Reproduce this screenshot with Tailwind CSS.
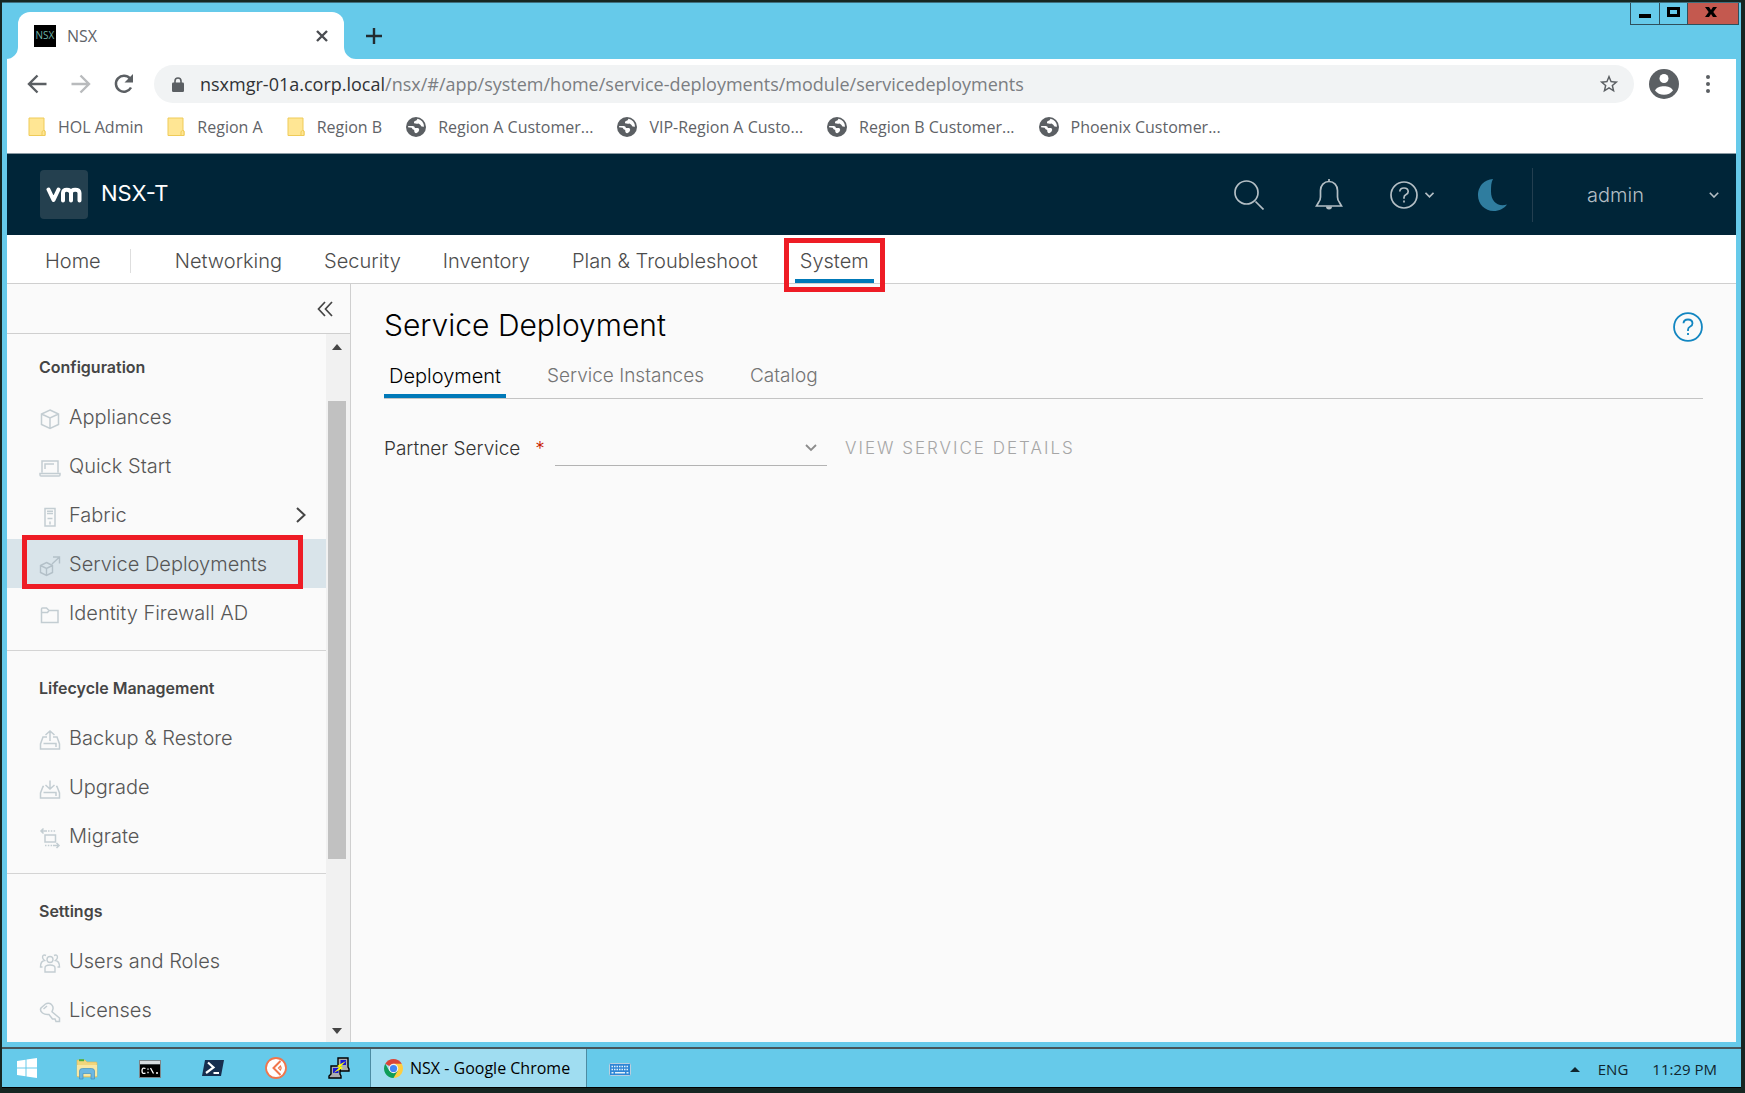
<!DOCTYPE html>
<html lang="en">
<head>
<meta charset="utf-8">
<title>NSX</title>
<script src="https://cdn.jsdelivr.net/npm/@tailwindcss/browser@4"></script>
</head>
<body class="flex h-screen flex-col overflow-hidden bg-[#162622] pt-0.5 pr-1 pl-0.5 pb-[5px] font-['Open_Sans',sans-serif] text-[#5f6368]">

<!-- Browser window -->
<div class="flex min-h-0 flex-1 flex-col bg-[#66caea] px-[5px] pb-[5px] border-t border-[#3f6f7e]">

  <!-- Title bar -->
  <div class="relative flex h-14 shrink-0 items-end">
    <div class="relative ml-[11px] flex h-[47px] w-[326px] items-center rounded-t-xl bg-white pl-4 pr-3">
      <svg class="absolute -left-3 bottom-0 size-3" viewBox="0 0 12 12" aria-hidden="true"><path d="M12 0v12H0A12 12 0 0 0 12 0z" fill="#fff"/></svg>
      <svg class="absolute -right-3 bottom-0 size-3" viewBox="0 0 12 12" aria-hidden="true"><path d="M0 0v12h12A12 12 0 0 1 0 0z" fill="#fff"/></svg>
      <span class="flex h-[22px] w-[22px] items-center justify-center overflow-hidden bg-black text-[10px] text-[#6fb3a6]">NSX</span>
      <span class="ml-[11px] flex-1 text-base">NSX</span>
      <button aria-label="Close tab" class="flex size-5 items-center justify-center"><svg class="size-3" viewBox="0 0 12 12" stroke="#4a4d51" stroke-width="2.4"><path d="M1 1l10 10M11 1L1 11"/></svg></button>
    </div>
    <button aria-label="New tab" class="mb-[13px] ml-5 flex size-5 items-center justify-center"><svg class="size-4" viewBox="0 0 16 16" stroke="#222b30" stroke-width="2.4"><path d="M8 0v16M0 8h16"/></svg></button>
    <div class="absolute -right-[3px] top-0 flex h-[22px] border border-t-0 border-[#2f4f5c]">
      <button aria-label="Minimize" class="flex w-[29px] items-center justify-center border-r border-[#2f4f5c] pt-1"><span class="h-1 w-3 bg-black"></span></button>
      <button aria-label="Maximize" class="flex w-7 items-center justify-center border-r border-[#2f4f5c] pb-1"><span class="h-2.5 w-[13px] border-[3px] border-black"></span></button>
      <button aria-label="Close" class="flex w-[50px] items-center justify-center bg-[#c4594f] pb-1 pr-1"><svg class="h-2.5 w-3" viewBox="0 0 12 10" fill="#000"><path d="M0 0h4l2 3 2-3h4L8.300 5 12 10H8L6 7l-2 3H0l3.700-5z"/></svg></button>
    </div>
  </div>

  <!-- Toolbar -->
  <div class="flex h-[50px] shrink-0 items-center bg-white pl-5 pr-[18px]">
    <button aria-label="Back"><svg class="size-5" viewBox="0 0 20 20" fill="none" stroke="#5b5f63" stroke-width="2.400"><path d="M19.500 10H2.500M10.500 1.500L2 10l8.500 8.500"/></svg></button>
    <button aria-label="Forward" class="ml-6"><svg class="size-5" viewBox="0 0 20 20" fill="none" stroke="#b9bbbd" stroke-width="2.400"><path d="M.5 10h17M9.500 1.500L18 10l-8.500 8.500"/></svg></button>
    <button aria-label="Reload" class="ml-[22px]"><svg class="size-[22px]" viewBox="0 0 22 22"><path d="M18 14.500A8 8 0 1 1 17 5.500" fill="none" stroke="#5b5f63" stroke-width="2.500"/><path d="M20 1v8.500h-8.500z" fill="#5b5f63"/></svg></button>
    <div class="ml-[19px] flex h-[38px] flex-1 items-center rounded-full bg-[#f1f3f4] pl-[18px] pr-[14px]">
      <svg class="h-[15px] w-3" viewBox="0 0 12 15" aria-hidden="true"><path d="M3 6V4a3 3 0 0 1 6 0v2" fill="none" stroke="#5b5f63" stroke-width="1.600"/><rect y="5.500" width="12" height="9.500" rx="1.200" fill="#5b5f63"/></svg>
      <div class="ml-4 flex-1 whitespace-nowrap text-lg leading-6 text-[#7b7e82]"><span class="text-[#303236]">nsxmgr-01a.corp.local</span>/nsx/#/app/system/home/service-deployments/module/servicedeployments</div>
      <button aria-label="Bookmark this tab"><svg class="size-[22px]" viewBox="0 0 24 24" fill="#5b5f63"><path d="M22 9.240l-7.190-.62L12 2 9.190 8.630 2 9.240l5.460 4.730L5.820 21 12 17.270 18.180 21l-1.630-7.030L22 9.240zM12 15.400l-3.760 2.270 1-4.280-3.320-2.880 4.380-.38L12 6.100l1.710 4.040 4.380.38-3.320 2.880 1 4.280L12 15.400z"/></svg></button>
    </div>
    <button aria-label="Profile" class="ml-[15px]"><svg class="size-[30px]" viewBox="0 0 30 30"><circle cx="15" cy="15" r="15" fill="#5b5f63"/><circle cx="15" cy="9.500" r="4.500" fill="#fff"/><path d="M6 21.500c1.500-3.200 5-4.300 9-4.300s7.500 1.100 9 4.300c-2 2.800-5.300 4.300-9 4.300s-7-1.500-9-4.300z" fill="#fff"/></svg></button>
    <button aria-label="Menu" class="ml-[19px] flex w-5 justify-center"><svg class="h-[18px] w-1" viewBox="0 0 4 18" fill="#5b5f63"><circle cx="2" cy="2" r="2"/><circle cx="2" cy="9" r="2"/><circle cx="2" cy="16" r="2"/></svg></button>
  </div>

  <!-- Bookmarks -->
  <svg class="hidden" aria-hidden="true">
    <symbol id="folder" viewBox="0 0 18 20"><path d="M1 1h15v12l1 1v4.500H1z" fill="#ffe694" stroke="#efcb58"/><path d="M14 18.500V15q0-1 1.500-1.500T17 15v3.500z" fill="#ffe694" stroke="#efcb58"/></symbol>
    <symbol id="globe" viewBox="0 0 20 20"><circle cx="10" cy="10" r="10" fill="#5b5f63"/><path d="M2.200 9h4.500q2 .2 2.300 2h3q1.300.5 1.200 2-.5 2.500-3 3.200-2.200-.2-2-3.200-2-.3-2.500-2.300L2 10.200zM11.500 1.800q-.5 2-2.500 2.200-1.500.5-1 2.300 2.500.7 4.500.2 2 .8 3 3l2.500.3A8 8 0 0 0 11.500 1.800z" fill="#fff"/></symbol>
  </svg>
  <nav aria-label="Bookmarks" class="flex h-[45px] shrink-0 items-center gap-6 whitespace-nowrap border-b border-[#8a9aa3] bg-white pb-2 pl-[21px] text-base">
    <a href="#" class="flex items-center gap-3"><svg class="h-5 w-[18px]"><use href="#folder"/></svg>HOL Admin</a>
    <a href="#" class="flex items-center gap-3"><svg class="h-5 w-[18px]"><use href="#folder"/></svg>Region A</a>
    <a href="#" class="flex items-center gap-3"><svg class="h-5 w-[18px]"><use href="#folder"/></svg>Region B</a>
    <a href="#" class="flex items-center gap-3"><svg class="size-5"><use href="#globe"/></svg>Region A Customer...</a>
    <a href="#" class="flex items-center gap-3"><svg class="size-5"><use href="#globe"/></svg>VIP-Region A Custo...</a>
    <a href="#" class="flex items-center gap-3"><svg class="size-5"><use href="#globe"/></svg>Region B Customer...</a>
    <a href="#" class="flex items-center gap-3"><svg class="size-5"><use href="#globe"/></svg>Phoenix Customer...</a>
  </nav>

  <!-- NSX application -->
  <div class="flex min-h-0 flex-1 flex-col bg-[#fafafa] font-['Inter',sans-serif] text-xl font-light text-[#454545]">
    <header class="flex h-[81px] shrink-0 items-center bg-[#002538] pl-[33px] pr-[17px] text-[#b4bfc5]">
      <div class="flex h-[49px] w-12 items-center justify-center rounded bg-[#24404f]">
        <svg class="h-4 w-9" viewBox="0 0 36 16" fill="none" stroke="#fff" stroke-width="4" stroke-linecap="round" stroke-linejoin="round" role="img" aria-label="VMware"><path d="M2.500 2.500l5 10.500 5-10.500M17 13.500V6q0-3.300 3.800-3.300T25 6v7.500M25 6q0-3.300 4.200-3.300T33.500 6v7.500"/></svg>
      </div>
      <h1 class="ml-[13px] flex-1 pb-0.5 text-[22px] font-normal text-white">NSX-T</h1>
      <button aria-label="Search"><svg class="size-[30px]" viewBox="0 0 30 30" fill="none" stroke="currentColor" stroke-width="1.700"><circle cx="12.500" cy="12.500" r="11.500"/><path d="M21.500 21.500l8 8"/></svg></button>
      <button aria-label="Notifications" class="ml-[51px]"><svg class="h-[31px] w-7" viewBox="0 0 28 31" fill="none" stroke="currentColor" stroke-width="1.700"><path d="M14 2.500c-5 0-8.500 4-8.500 9V18q0 3-2 5.500L1.500 27h25l-2-3.500q-2-2.500-2-5.500v-6.500c0-5-3.500-9-8.500-9z"/><path d="M14 0v3"/><path d="M11 27.500a3 3 0 0 0 6 0z" fill="currentColor" stroke="none"/></svg></button>
      <button aria-label="Help menu" class="ml-[47px] flex items-center gap-[7px]"><svg class="size-7" viewBox="0 0 28 28" fill="none" stroke="currentColor" stroke-width="1.700"><circle cx="14" cy="14" r="13"/><path d="M9.800 10.500Q10 7 14 7t4.200 3.500q0 2-2.100 3T14 16.500v1.200"/><path d="M14 19.500v2"/></svg><svg class="h-1.5 w-[9px]" viewBox="0 0 9 6" fill="none" stroke="currentColor" stroke-width="1.600"><path d="M.5.8l4 4 4-4"/></svg></button>
      <button aria-label="Dark theme" class="ml-[43px]"><svg class="h-8 w-[30px]" viewBox="0 0 30 32" fill="#2f7d9f"><path d="M16 0A15.500 15.500 0 0 0 1 16.500C1 25 8 32 16.500 32 22.500 32 27 29.500 30 25.500c-9 3-16-3-16-13C14 7.500 14 3.500 16 0z"/></svg></button>
      <div class="ml-[25px] h-[54px] w-px bg-[#233f50]"></div>
      <button class="ml-[54px] flex w-[132px] items-center justify-between">admin<svg class="h-1.5 w-[10px]" viewBox="0 0 10 6" fill="none" stroke="currentColor" stroke-width="1.600"><path d="M.8.8L5 5 9.200.8"/></svg></button>
    </header>

    <nav aria-label="Main" class="flex h-[49px] shrink-0 items-stretch gap-8 whitespace-nowrap border-b border-[#cfcfcf] bg-white pl-[33px] text-[#4c4c4c]">
      <a href="#" class="flex items-center px-[5px] pt-1">Home</a>
      <span class="-ml-2 mr-[7px] mt-[14px] h-6 w-px bg-[#dedede]"></span>
      <a href="#" class="flex items-center px-[5px] pt-1">Networking</a>
      <a href="#" class="flex items-center px-[5px] pt-1">Security</a>
      <a href="#" class="flex items-center px-[5px] pt-1">Inventory</a>
      <a href="#" class="flex items-center px-[5px] pt-1">Plan &amp; Troubleshoot</a>
      <a href="#" aria-current="page" class="relative flex items-center px-[5px] pt-1"><span class="absolute inset-x-0 bottom-0 h-1 bg-[#0079b8]"></span>System<span class="pointer-events-none absolute -inset-x-[11px] -bottom-[9px] top-[3px] border-[5px] border-[#ee1c25]"></span></a>
    </nav>

    <div class="flex min-h-0 flex-1">
      <!-- Sidebar -->
      <aside class="flex w-[344px] shrink-0 flex-col border-r border-[#cfcfcf]">
        <div class="flex h-[50px] shrink-0 items-center justify-end border-b border-[#cfcfcf] pr-[17px]">
          <button aria-label="Collapse sidebar"><svg class="size-4" viewBox="0 0 16 16" fill="none" stroke="#454545" stroke-width="1.700"><path d="M8 1L1.500 8 8 15M15 1L8.500 8 15 15"/></svg></button>
        </div>
        <div class="flex min-h-0 flex-1">
          <div class="min-w-0 flex-1 overflow-hidden text-[#565656]">
            <section class="border-b border-[#d4d4d4] pb-[13px] pt-2">
              <h2 class="pl-8 text-base font-semibold leading-[50px] text-[#454545]">Configuration</h2>
              <a href="#" class="flex h-[49px] items-center gap-2 pl-8"><svg class="mt-1 size-[22px]" viewBox="0 0 22 22" fill="none" stroke="#c3cdd2" stroke-width="1.500"><path d="M11 2l8.500 4v10.500L11 20.500l-8.500-4V6zM2.500 6l8.500 4 8.500-4M11 10v10.500"/></svg>Appliances</a>
              <a href="#" class="flex h-[49px] items-center gap-2 pl-8"><svg class="mt-1 size-[22px]" viewBox="0 0 22 22" fill="none" stroke="#c3cdd2" stroke-width="1.500"><path d="M3 15.500V4h16v11.500M6 12V7h9M1 16.500h20v1.500q0 1-1 1H2q-1 0-1-1z"/></svg>Quick Start</a>
              <a href="#" class="flex h-[49px] items-center gap-2 pl-8 pr-5"><svg class="mt-1 size-[22px]" viewBox="0 0 22 22" fill="none" stroke="#c3cdd2" stroke-width="1.500"><path d="M6 2.500h10v17.500H6zM8 5.200h6M8 7.500h6M8.500 12.500h5M11 15.500v3"/></svg><span class="flex-1">Fabric</span><svg class="h-4 w-2.5" viewBox="0 0 10 16" fill="none" stroke="#454545" stroke-width="2"><path d="M1 1l7.500 7L1 15"/></svg></a>
              <a href="#" aria-current="page" class="relative flex h-[49px] items-center gap-2 bg-[#d9e4ea] pl-8"><svg class="mt-1 size-[22px]" viewBox="0 0 22 22" fill="none" stroke="#b3c0c8" stroke-width="1.400"><path d="M7.500 7.500l6 3v7l-6 3-6-3v-7zM1.500 10.500l6 3 6-3M7.500 13.500v7M13 9l7.500-7M14 2h6.500v6.500"/></svg>Service Deployments<span class="pointer-events-none absolute -bottom-px -top-1 left-[15px] right-[23px] border-[5px] border-[#ee1c25]"></span></a>
              <a href="#" class="flex h-[49px] items-center gap-2 pl-8"><svg class="mt-1 size-[22px]" viewBox="0 0 22 22" fill="none" stroke="#c3cdd2" stroke-width="1.500"><path d="M2.500 18.500V5q0-1 1-1h4l2.500 2.500h9v12zM2.500 8.500h6L10 6.500"/></svg>Identity Firewall AD</a>
            </section>
            <section class="border-b border-[#d4d4d4] pb-[13px] pt-3">
              <h2 class="pl-8 text-base font-semibold leading-[50px] text-[#454545]">Lifecycle Management</h2>
              <a href="#" class="flex h-[49px] items-center gap-2 pl-8"><svg class="mt-1 size-[22px]" viewBox="0 0 22 22" fill="none" stroke="#c3cdd2" stroke-width="1.500"><path d="M8 8H4l-2.500 7v5h19v-5L18 8h-4M4.500 14.500H17v3.500M11 12V2M6.500 6L11 2l4.500 4"/></svg>Backup &amp; Restore</a>
              <a href="#" class="flex h-[49px] items-center gap-2 pl-8"><svg class="mt-1 size-[22px]" viewBox="0 0 22 22" fill="none" stroke="#c3cdd2" stroke-width="1.500"><path d="M5 8.500H4L1.500 15v5h19v-5L18 8.500h-1M4.500 14.500H17v3.500M11 2.500V11M6.500 7L11 11l4.500-4"/></svg>Upgrade</a>
              <a href="#" class="flex h-[49px] items-center gap-2 pl-8"><svg class="mt-1 size-[22px]" viewBox="0 0 22 22" fill="none" stroke="#c3cdd2" stroke-width="1.500"><path d="M6 8h10.500v7H6zM1.500 4H8M4.500 1.500L2 4l2.500 2.500M14 18.500h6M17.500 16l2.500 2.500-2.500 2.500"/><path d="M9 4h8M6 18.500h8" stroke-dasharray="1.500 1.300"/></svg>Migrate</a>
            </section>
            <section class="pb-[13px] pt-3">
              <h2 class="pl-8 text-base font-semibold leading-[50px] text-[#454545]">Settings</h2>
              <a href="#" class="flex h-[49px] items-center gap-2 pl-8"><svg class="mt-1 size-[22px]" viewBox="0 0 22 22" fill="none" stroke="#c3cdd2" stroke-width="1.400"><circle cx="11" cy="7.500" r="3"/><path d="M6 20v-4q0-3 5-3t5 3v4zM7 3.500Q4 2 3.500 5q0 2 2 3.500Q1.500 9 1.500 15h2M15 3.500q3-1.500 3.500 1.500 0 2-2 3.500 4 .5 4 6.500h-2"/></svg>Users and Roles</a>
              <a href="#" class="flex h-[49px] items-center gap-2 pl-8"><svg class="mt-1 size-[22px]" viewBox="0 0 22 22" fill="none" stroke="#c3cdd2" stroke-width="1.500"><path d="M9.500 2.200q2-.2 3.500 2 1.700 2 .7 4.500l-.7 2 7.500 6.300v3.500H17l-1-2.500h-2.500L10 13.500q-4 .5-6.500-1.500Q.5 9.500 2 7l4.500-4q1.500-1 3-.8zM4.500 8L8 5"/></svg>Licenses</a>
            </section>
          </div>
          <div class="flex w-6 flex-col items-center bg-[#f1f1f1] pb-2 pr-0.5 pt-2.5" aria-hidden="true">
            <svg class="h-1.5 w-2.5" viewBox="0 0 10 6" fill="#454545"><path d="M0 6l5-6 5 6z"/></svg>
            <div class="flex w-full flex-1 flex-col items-center pt-[51px]">
              <div class="h-[73%] w-[18px] bg-[#c1c1c1]"></div>
            </div>
            <svg class="h-1.5 w-2.5" viewBox="0 0 10 6" fill="#454545"><path d="M0 0l5 6 5-6z"/></svg>
          </div>
        </div>
      </aside>

      <!-- Content -->
      <main class="min-w-0 flex-1 px-[33px] pt-[17px]">
        <div class="flex h-12 items-center justify-between">
          <h2 class="text-[30px] leading-[48px] text-black">Service Deployment</h2>
          <button aria-label="Help" class="mt-1"><svg class="size-[30px]" viewBox="0 0 28 28" fill="none" stroke="#1286c1" stroke-width="1.700"><circle cx="14" cy="14" r="13"/><path d="M9.800 10.500Q10 7 14 7t4.200 3.500q0 2-2.100 3T14 16.500v1.200"/><path d="M14 19.500v2"/></svg></button>
        </div>
        <div role="tablist" class="flex h-[50px] gap-9 border-b border-[#c4c4c4] text-[#747474]">
          <button role="tab" aria-selected="true" class="border-b-4 border-[#0079b8] px-[5px] pt-2 text-black">Deployment</button>
          <button role="tab" aria-selected="false" class="px-[5px] pt-1.5 text-[19px]">Service Instances</button>
          <button role="tab" aria-selected="false" class="px-[5px] pt-1.5 text-[19px]">Catalog</button>
        </div>
        <div class="mt-[31px] flex h-9 items-center">
          <label for="partner" class="flex w-[171px] gap-[15px] pt-0.5 text-[19px] text-[#333]">Partner Service <span class="text-[#c92100]">*</span></label>
          <div class="relative h-full w-[272px]">
            <select id="partner" class="h-full w-full appearance-none border-b border-[#b3b3b3] bg-transparent pr-8"><option></option></select>
            <svg class="pointer-events-none absolute right-2.5 top-3.5 h-2 w-3" viewBox="0 0 12 8" fill="none" stroke="#8c8c8c" stroke-width="1.800"><path d="M1 1l5 5 5-5"/></svg>
          </div>
          <button disabled class="ml-[18px] pt-0.5 text-[17px] tracking-[2px] text-[#a6a6a6]">VIEW SERVICE DETAILS</button>
        </div>
      </main>
    </div>
  </div>
</div>

<!-- Taskbar -->
<footer class="flex h-[41px] shrink-0 items-stretch border-b border-t-2 border-b-black border-t-[#46565c] bg-[#66caea] text-base text-[#10262e]">
  <button aria-label="Start" class="flex w-[53px] items-center justify-center pr-1"><svg class="size-5" viewBox="0 0 20 20" fill="#fff"><path d="M0 3l8.500-1.200v7.700H0zM9.500 1.600L20 0v9.500H9.500zM0 10.500h8.500v7.700L0 17zM9.500 10.500H20V20L9.500 18.400z"/></svg></button>
  <button aria-label="File Explorer" class="flex w-[63px] items-center justify-center pt-0.5"><svg class="size-[22px]" viewBox="0 0 22 22"><path d="M1 2h8l2 2h9q1 0 1 1v14H2q-1 0-1-1z" fill="#f1d67c" stroke="#d7b659" stroke-width=".6"/><path d="M3 2.200h5" stroke="#4fb03a" stroke-width="2"/><path d="M1 7h20v11H1z" fill="#f8e7a4"/><path d="M3.500 21v-8q0-2.500 3-2.500h9q3 0 3 2.500v8H15v-5.500H7V21z" fill="#6bb7e2" stroke="#4490c0" stroke-width=".7"/></svg></button>
  <button aria-label="Command Prompt" class="flex w-[63px] items-center justify-center pt-0.5"><svg class="h-[18px] w-[22px]" viewBox="0 0 22 18"><path d="M0 0h22v18H0z" fill="#7c8589"/><path d="M1 1h20v3H1z" fill="#d7dcdf"/><path d="M1 4.500h20V17H1z" fill="#000"/><path d="M6.500 8.500Q3 7 3 10.800T6.500 13M9 8.500v1.300M9 11.800v1.400M11.500 8l3 5.500M17 13h2" stroke="#fff" stroke-width="1.300" fill="none"/></svg></button>
  <button aria-label="PowerShell" class="flex w-[63px] items-center justify-center"><svg class="h-4 w-[22px]" viewBox="0 0 22 16"><path d="M3 0h19l-3 16H0z" fill="#172e4e"/><path d="M6 2.500l5.500 5L4 13M11.500 13H17" stroke="#fff" stroke-width="2.200" fill="none"/></svg></button>
  <button aria-label="API client" class="flex w-[63px] items-center justify-center"><svg class="size-[22px]" viewBox="0 0 22 22" fill="none" stroke="#f0764c"><circle cx="11" cy="11" r="10" fill="#fff" stroke-width="1.800"/><path d="M15.500 4L8.500 11l7 7" stroke-width="2"/><path d="M15.500 9L13.500 11l2 2q1.500-2 0-4z" stroke-width="1.200"/></svg></button>
  <button aria-label="PuTTY" class="flex w-[63px] items-center justify-center"><svg class="size-[22px]" viewBox="0 0 22 22" stroke="#000" stroke-width="1.400"><path d="M10 1h10v9l1 2v2h-9v-2l-2-1z" fill="#a9adb0"/><path d="M12.500 3H18v5h-5.500z" fill="#1717d8" stroke="none"/><path d="M3 9h9v8l1 2v2H1v-2l2-2z" fill="#a9adb0"/><path d="M5 11h5.500v5H5z" fill="#1717d8" stroke="none"/><path d="M18 4l-9 5 2.500 1.500L5.500 16l9.500-5-2.500-1.500z" fill="#ff0" stroke="none"/></svg></button>
  <button class="flex w-[217px] items-center gap-[7px] border-x border-[#4d8ca3] bg-[#a0ddf1] pl-[13px] text-black"><svg class="size-[19px]" viewBox="0 0 20 20"><path d="M10 10L1.340 5A10 10 0 0 1 18.660 5z" fill="#db4437"/><path d="M10 10V5h8.660A10 10 0 0 1 10 20z" fill="#ffcd40"/><path d="M10 10l4.330 2.500L10 20A10 10 0 0 1 1.340 5L5.670 12.500z" fill="#0f9d58"/><circle cx="10" cy="10" r="5" fill="#f1f1f1"/><circle cx="10" cy="10" r="3.800" fill="#4285f4"/></svg>NSX - Google Chrome</button>
  <button aria-label="Touch keyboard" class="ml-[22px] flex items-center pt-0.5"><svg class="h-[13px] w-[22px]" viewBox="0 0 22 13"><rect x=".5" y=".5" width="21" height="12" rx="1" fill="#2f86d6" stroke="#b9cfdf"/><path d="M2.500 3.500h17M2.500 6.500h17" stroke="#e4f1fa" stroke-width="1.600" stroke-dasharray="1.500 1"/><path d="M2.500 9.700h2M6 9.700h10M17.500 9.700h2" stroke="#e4f1fa" stroke-width="1.600"/></svg></button>
  <div class="ml-auto flex items-center pr-6 pt-0.5 text-[15px]">
    <button aria-label="Show hidden icons"><svg class="h-[5px] w-2.5" viewBox="0 0 10 5" fill="#10262e"><path d="M0 5l5-5 5 5z"/></svg></button>
    <button class="ml-[18px]">ENG</button>
    <time class="ml-6">11:29 PM</time>
  </div>
</footer>
</body>
</html>
